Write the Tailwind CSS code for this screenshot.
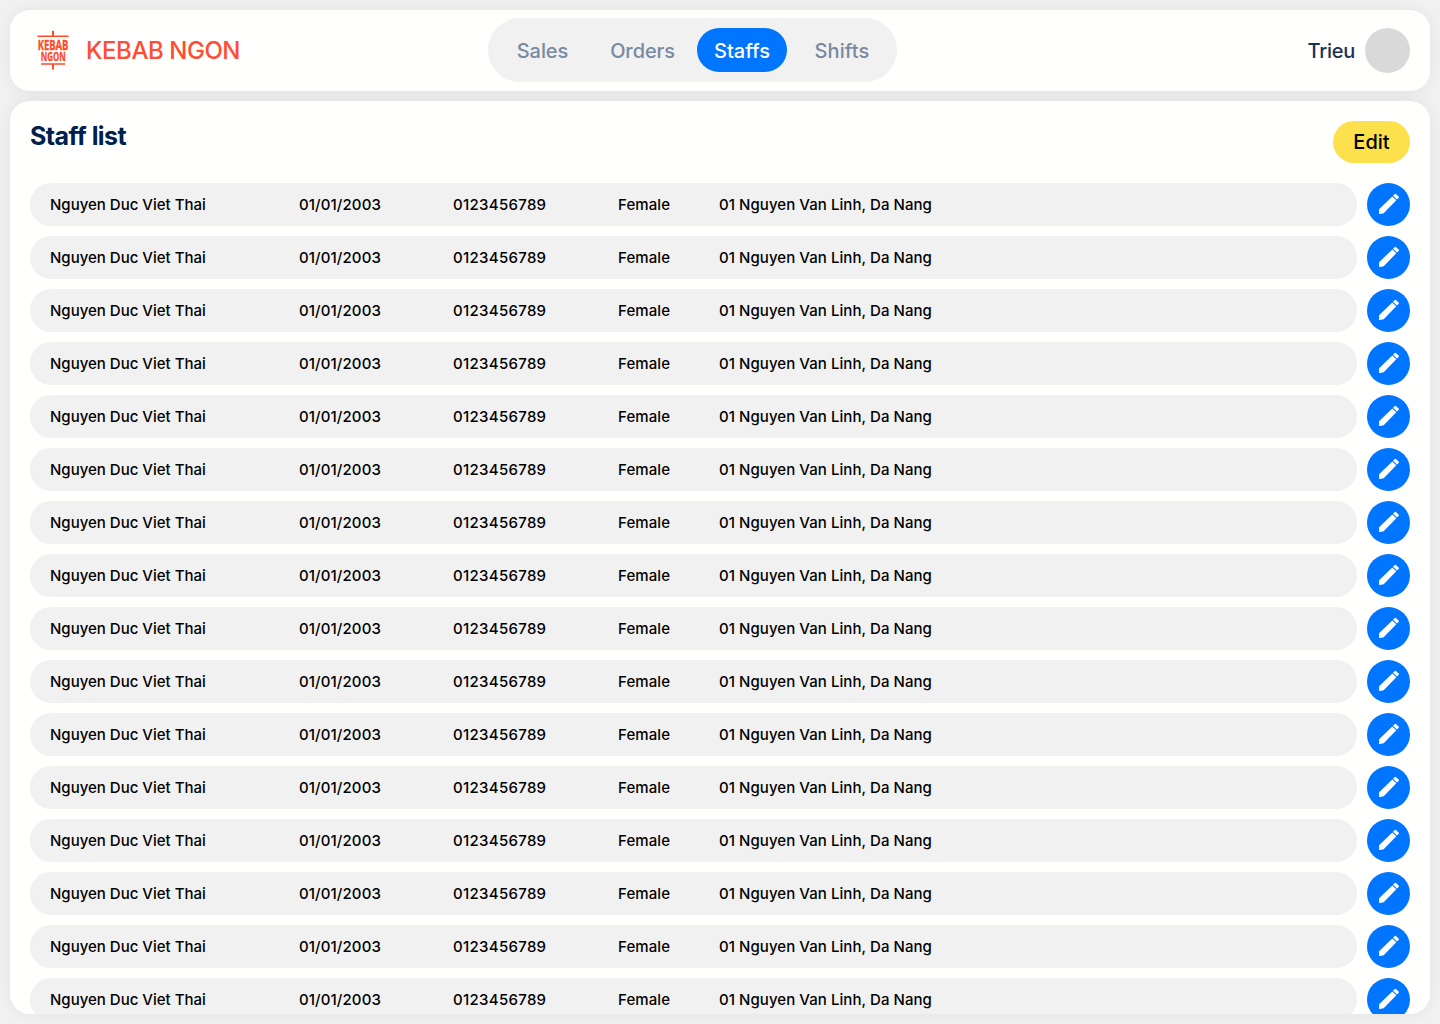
<!DOCTYPE html>
<html lang="en">
<head>
<meta charset="utf-8">
<title>Kebab Ngon - Staff list</title>
<script src="https://cdn.jsdelivr.net/npm/@tailwindcss/browser@4"></script>
</head>
<body class="h-screen overflow-hidden bg-[#f2f2f2] p-2.5 font-['Inter',sans-serif] text-black">
<div class="flex h-[1004px] flex-col gap-2.5">
  <header class="grid h-[80.5px] shrink-0 grid-cols-[478px_409px_1fr] items-center rounded-[20px] bg-[#fffffe] shadow-[0_0_20px_rgba(0,0,0,0.07)]">
    <div class="flex items-center pl-5">
      <svg class="h-[46px] w-[46px] overflow-visible" viewBox="0 0 46 46" fill="#ff4b26" font-family="Open Sans, sans-serif" font-weight="700">
        <path d="M22 3.700h2V8.400h14.500V10H7.500V8.400H22zM11 36.200h24v1.600H24v4.800h-2v-4.800H11z"/>
        <text x="7.700" y="23" font-size="14" textLength="30.600" lengthAdjust="spacingAndGlyphs" stroke="#ff4b26" stroke-width="0.350">KEBAB</text>
        <text x="10.700" y="34.400" font-size="13" textLength="25" lengthAdjust="spacingAndGlyphs" stroke="#ff4b26" stroke-width="0.350">NGON</text>
      </svg>
      <span class="ml-2.5 pt-0.5 text-2xl font-[450] tracking-[-0.45px] text-[#ff4d35]">KEBAB NGON</span>
    </div>
    <nav class="flex h-16 items-center rounded-[32px] bg-[#f1f1f1] pl-3 text-xl text-[#7889a0]">
      <a class="flex h-11 w-[85px] items-center justify-center pt-px font-[450] tracking-[-0.05px]">Sales</a>
      <a class="ml-2.5 flex h-11 w-[95px] items-center justify-center pt-px font-[450] tracking-[-0.1px]">Orders</a>
      <a class="ml-[7px] flex h-11 w-[90px] items-center justify-center rounded-[22px] bg-[#0075ff] pt-px font-medium text-white">Staffs</a>
      <a class="ml-2.5 flex h-11 w-[90px] items-center justify-center pt-px font-[450] tracking-[0.1px]">Shifts</a>
    </nav>
    <div class="flex items-center justify-end gap-2.5 pr-5">
      <span class="pt-px text-xl font-[450] tracking-[-0.25px] text-[#1c3150]">Trieu</span>
      <span class="size-[45px] rounded-full bg-[#d9d9d9]"></span>
    </div>
  </header>
  <main class="min-h-0 flex-1 overflow-hidden rounded-[20px] bg-[#fffffe] px-5 pt-5 shadow-[0_0_20px_rgba(0,0,0,0.07)]">
    <div class="flex h-[62px] items-start justify-between">
      <h1 class="text-[25px] leading-[31px] font-bold tracking-[-0.55px] text-[#00204d]">Staff list</h1>
      <button class="h-[42px] w-[77px] rounded-[21px] bg-[#fde14c] text-xl font-medium">Edit</button>
    </div>
    <ul id="staff" class="flex flex-col gap-2.5"></ul>
  </main>
</div>
<template id="row">
  <li class="flex h-[43px] shrink-0 gap-2.5">
    <div class="grid flex-1 grid-cols-[249px_154px_165px_101px_1fr] items-center rounded-[21px] bg-[#f1f1f1] pt-0.5 pl-5 text-[15px] font-medium">
      <span>Nguyen Duc Viet Thai</span>
      <span class="tracking-[0.1px]">01/01/2003</span>
      <span class="tracking-[0.3px]">0123456789</span>
      <span class="tracking-[0.1px]">Female</span>
      <span class="tracking-[0.06px]">01 Nguyen Van Linh, Da Nang</span>
    </div>
    <button class="flex size-[43px] items-center justify-center rounded-full bg-[#0075ff]" aria-label="Edit">
      <svg class="size-[43px]" viewBox="0 0 43 43" fill="#fff">
        <path d="M12.100 31V26.200L25.300 13.400 29.300 17.200 16.700 30.300 12.900 31.100zM26 12.700L27.600 11.200Q28.400 10.500 29.200 11.200L31.600 13.400Q32.400 14.200 31.600 15L30 16.600z"/>
      </svg>
    </button>
  </li>
</template>
<script>
  const list = document.getElementById('staff');
  const row = document.getElementById('row');
  for (let i = 0; i < 16; i++) list.append(row.content.cloneNode(true));
</script>
</body>
</html>
